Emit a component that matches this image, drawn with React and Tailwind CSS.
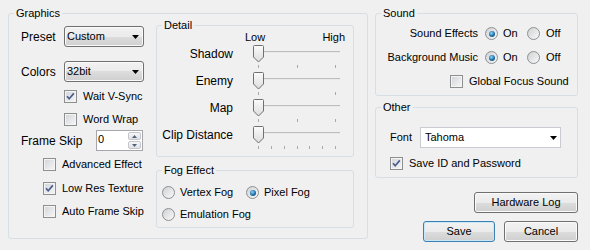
import { useState } from 'react';

const sliders = [
  { label: 'Shadow', ticks: [8, 47, 85] },
  { label: 'Enemy', ticks: [8, 85] },
  { label: 'Map', ticks: [8, 47, 85] },
  { label: 'Clip Distance', ticks: [8, 21, 34, 47, 59, 72, 85] },
];

function GroupBox({ title, className, children }) {
  return (
    <fieldset className={`rounded-[3px] border border-[#d5dfe5] ${className}`}>
      <legend className="ml-[5px] px-[2px] text-[11px] leading-[13px]">{title}</legend>
      {children}
    </fieldset>
  );
}

function CheckBox({ checked, label, className = '' }) {
  return (
    <label className={`flex h-[13px] items-center gap-[6px] text-[11px] leading-[13px] ${className}`}>
      <span className="grid size-[13px] shrink-0 place-items-center border border-[#8e8f8f] bg-gradient-to-br from-[#d2d4d8] to-[#f7f7f7] shadow-[inset_0_0_0_1px_#f4f4f4]">
        {checked && (
          <svg width="11" height="11" viewBox="0 0 11 11">
            <path d="M2 5.2 L4.2 7.8 L8.8 2.4" fill="none" stroke="#4a5d8f" strokeWidth="1.7" />
          </svg>
        )}
      </span>
      {label}
    </label>
  );
}

function Radio({ checked, label, className = '' }) {
  return (
    <label className={`flex h-[13px] items-center gap-[5px] text-[11px] leading-[13px] ${className}`}>
      <span className="grid size-[13px] shrink-0 place-items-center rounded-full border border-[#8e8f8f] bg-gradient-to-br from-[#cfd1d4] to-[#fafafa]">
        {checked && (
          <span className="size-[6px] rounded-full bg-[radial-gradient(circle_at_40%_35%,#8fd6ff,#1b6ea6_55%,#0b3c62)]" />
        )}
      </span>
      {label}
    </label>
  );
}

function Arrow() {
  return (
    <svg width="7" height="4" viewBox="0 0 7 4">
      <path d="M0 0h7l-3.5 4z" fill="#000" />
    </svg>
  );
}

function Combo({ value, className = '' }) {
  return (
    <div
      className={`flex h-[21px] items-center justify-between rounded-[3px] border border-[#707070] bg-[linear-gradient(#f2f2f2,#ebebeb_50%,#dddddd_50%,#cfcfcf)] pl-[2px] pr-[4px] text-[11px] shadow-[inset_0_0_0_1px_#fafafa] ${className}`}
    >
      <span>{value}</span>
      <Arrow />
    </div>
  );
}

function Spin() {
  return (
    <div className="flex h-[21px] w-[47px] border border-[#a5a7ad] bg-white">
      <span className="flex-1 pl-[1px] pt-[2px] text-[11px] leading-[13px]">0</span>
      <div className="flex w-[15px] flex-col gap-px p-px">
        {['M0 3h5l-2.5-3z', 'M0 0h5l-2.5 3z'].map((d) => (
          <span
            key={d}
            className="grid flex-1 place-items-center rounded-[2px] border border-[#c3c6cc] bg-gradient-to-b from-[#f6f6f6] to-[#e2e2e2]"
          >
            <svg width="5" height="3" viewBox="0 0 5 3">
              <path d={d} fill="#4d6185" />
            </svg>
          </span>
        ))}
      </div>
    </div>
  );
}

function TrackBar({ id, ticks }) {
  return (
    <svg width="96" height="27" viewBox="0 0 96 27" className="ml-[17px] overflow-visible">
      <defs>
        <linearGradient id={id} x1="0" y1="0" x2="0" y2="1">
          <stop offset="0" stopColor="#fbfbfb" />
          <stop offset="1" stopColor="#dcdcdc" />
        </linearGradient>
      </defs>
      <rect x="6" y="11" width="84" height="1" fill="#bdbdbd" />
      <rect x="6" y="12" width="84" height="1" fill="#e9e9e9" />
      {ticks.map((x) => (
        <rect key={x} x={x} y="25" width="1" height="3" fill="#a8a8a8" />
      ))}
      <path
        d="M3.5 6.5a1 1 0 0 1 1-1h8a1 1 0 0 1 1 1v10.5l-5 5l-5-5z"
        fill={`url(#${id})`}
        stroke="#707070"
      />
    </svg>
  );
}

function Button({ children, primary, className = '' }) {
  return (
    <button
      type="button"
      className={`h-[21px] rounded-[3px] border bg-[linear-gradient(#f2f2f2,#ebebeb_50%,#dddddd_50%,#cfcfcf)] text-[11px] leading-[13px] ${
        primary
          ? 'border-[#3c7fb1] shadow-[inset_0_0_0_1px_#c8e8f8]'
          : 'border-[#707070] shadow-[inset_0_0_0_1px_#fafafa]'
      } ${className}`}
    >
      {children}
    </button>
  );
}

export default function App() {
  const [fog] = useState('pixel');

  return (
    <div className="flex h-[250px] w-[590px] gap-[7px] bg-[#f0f0f0] pl-[8px] pt-[7px] font-['Liberation_Sans',Arial,sans-serif] text-black">
      <GroupBox title="Graphics" className="h-[232px] w-[360px] shrink-0">
        <div className="flex">
          <div className="flex w-[147px] flex-col">
            <div className="mt-[6px] flex items-center pl-[12px]">
              <span className="w-[43px] text-[12px] leading-[14px]">Preset</span>
              <Combo value="Custom" className="w-[80px]" />
            </div>
            <div className="mt-[14px] flex items-center pl-[12px]">
              <span className="w-[43px] text-[12px] leading-[14px]">Colors</span>
              <Combo value="32bit" className="w-[80px]" />
            </div>
            <CheckBox checked label="Wait V-Sync" className="ml-[55px] mt-[8px]" />
            <CheckBox label="Word Wrap" className="ml-[55px] mt-[10px]" />
            <div className="mt-[4px] flex items-center pl-[12px]">
              <span className="w-[75px] text-[12px] leading-[14px]">Frame Skip</span>
              <Spin />
            </div>
            <CheckBox label="Advanced Effect" className="ml-[34px] mt-[7px]" />
            <CheckBox checked label="Low Res Texture" className="ml-[34px] mt-[11px]" />
            <CheckBox label="Auto Frame Skip" className="ml-[34px] mt-[10px]" />
          </div>

          <div className="-mt-px flex w-[198px] flex-col">
            <GroupBox title="Detail" className="h-[138px]">
              <div className="-mt-px flex h-[9px] justify-between pl-[88px] pr-[8px] text-[11px] leading-[13px]">
                <span>Low</span>
                <span>High</span>
              </div>
              {sliders.map((s, i) => (
                <div key={s.label} className="flex h-[27px] items-center">
                  <span className="w-[76px] text-right text-[12px] leading-[14px]">{s.label}</span>
                  <TrackBar id={`thumb${i}`} ticks={s.ticks} />
                </div>
              ))}
            </GroupBox>

            <GroupBox title="Fog Effect" className="mt-[7px] h-[64px]">
              <div className="mt-[9px] flex pl-[5px]">
                <Radio checked={fog === 'vertex'} label="Vertex Fog" className="w-[84px]" />
                <Radio checked={fog === 'pixel'} label="Pixel Fog" />
              </div>
              <div className="mt-[9px] flex pl-[5px]">
                <Radio checked={fog === 'emulation'} label="Emulation Fog" />
              </div>
            </GroupBox>
          </div>
        </div>
      </GroupBox>

      <div className="flex w-[203px] flex-col">
        <GroupBox title="Sound" className="h-[89px]">
          <div className="mt-[7px] flex h-[13px] items-center text-[11px]">
            <span className="w-[102px] text-right">Sound Effects</span>
            <Radio checked label="On" className="ml-[7px] w-[42px]" />
            <Radio label="Off" className="gap-[6px]" />
          </div>
          <div className="mt-[11px] flex h-[13px] items-center text-[11px]">
            <span className="w-[102px] text-right">Background Music</span>
            <Radio checked label="On" className="ml-[7px] w-[42px]" />
            <Radio label="Off" className="gap-[6px]" />
          </div>
          <CheckBox label="Global Focus Sound" className="ml-[74px] mt-[11px] gap-[5px]" />
        </GroupBox>

        <GroupBox title="Other" className="mt-[5px] h-[77px]">
          <div className="mt-[13px] flex items-center pl-[14px] text-[11px]">
            <span className="w-[30px]">Font</span>
            <div className="flex h-[21px] w-[141px] items-center justify-between border border-[#c9cbd0] bg-white pl-[4px] pr-[3px]">
              <span>Tahoma</span>
              <Arrow />
            </div>
          </div>
          <CheckBox checked label="Save ID and Password" className="ml-[14px] mt-[9px]" />
        </GroupBox>

        <Button className="mt-[14px] w-[104px] self-end">Hardware Log</Button>
        <div className="mt-[8px] flex justify-end gap-[9px]">
          <Button primary className="w-[72px]">
            Save
          </Button>
          <Button className="w-[74px]">Cancel</Button>
        </div>
      </div>
    </div>
  );
}
